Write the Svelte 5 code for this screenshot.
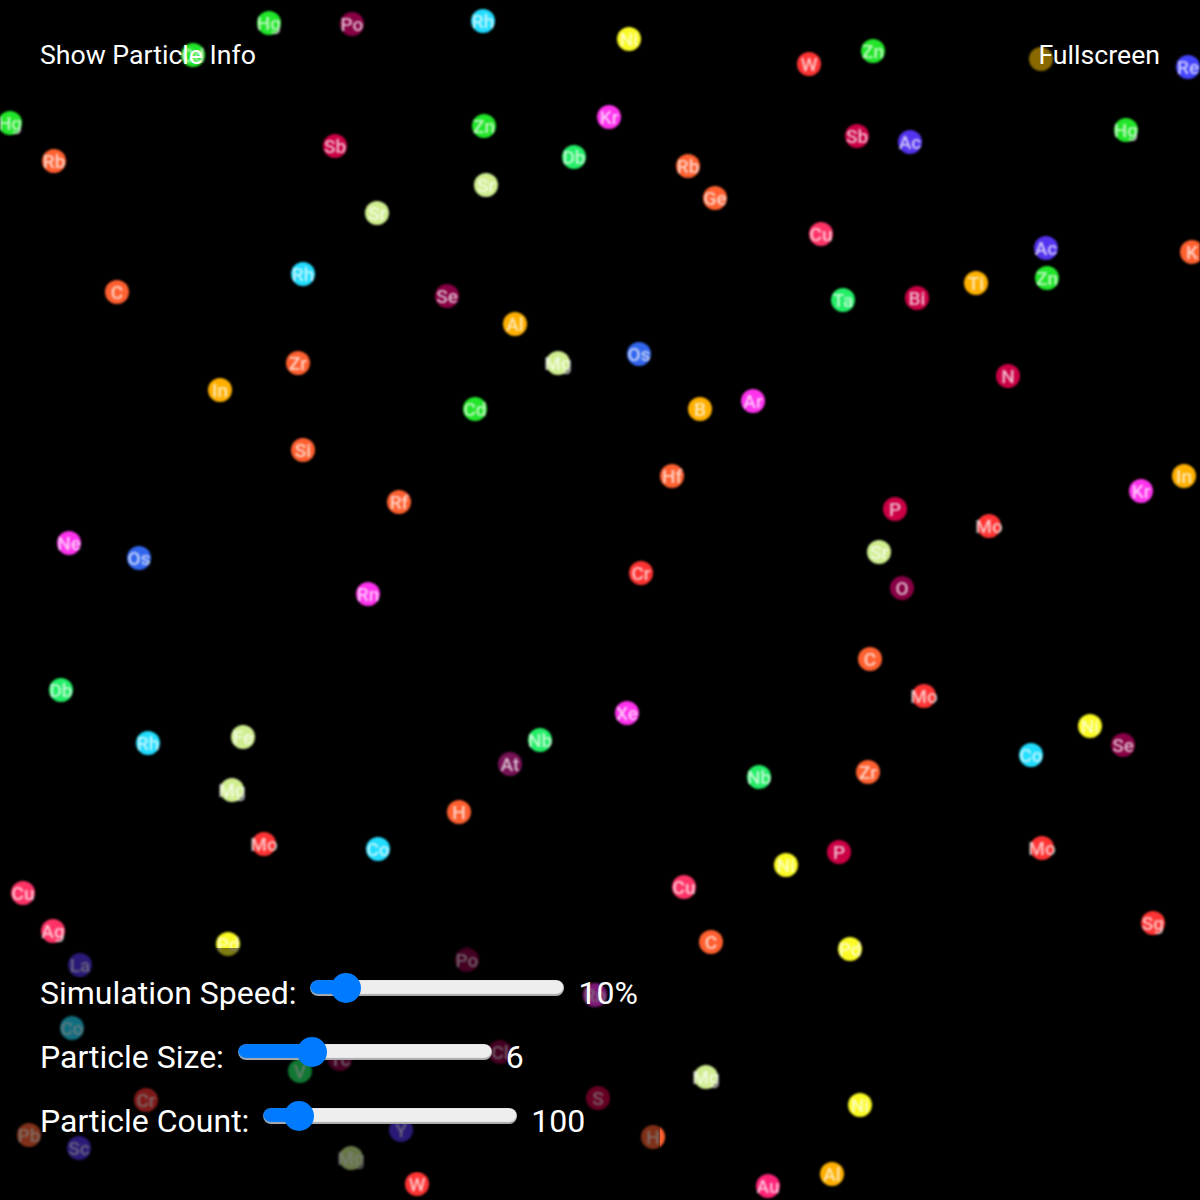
<script lang="ts">
	const ORANGE = '#ff6030';
	const RED = '#ff3333';
	const PINK = '#ff3366';
	const CRIMSON = '#cc0044';
	const WINE = '#880044';
	const MAGENTA = '#ff33ee';
	const VIOLET = '#5533ee';
	const BLUE = '#3366ee';
	const INDIGO = '#4444ff';
	const CYAN = '#22ddff';
	const GREEN = '#22e62a';
	const MINT = '#22ee66';
	const GOLD = '#ffb000';
	const YELLOW = '#fafa22';
	const PALE = '#d0ee90';

	// x, y, symbol, colour
	const particles: [number, number, string, string][] = [
		[269, 23, 'Hg', GREEN], [352, 24, 'Po', WINE], [483, 21, 'Rh', CYAN], [193, 55, 'Cd', GREEN],
		[629, 39, 'Ni', YELLOW], [809, 64, 'W', RED], [873, 51, 'Zn', GREEN], [1041, 59, '', '#8a6a00'],
		[1188, 67, 'Re', INDIGO], [10, 123, 'Hg', GREEN], [54, 161, 'Rb', ORANGE], [335, 146, 'Sb', CRIMSON],
		[484, 126, 'Zn', GREEN], [609, 117, 'Kr', MAGENTA], [574, 157, 'Db', MINT], [486, 185, 'Sr', PALE],
		[377, 213, 'Sr', PALE], [688, 166, 'Rb', ORANGE], [715, 198, 'Ge', ORANGE], [857, 136, 'Sb', CRIMSON],
		[910, 142, 'Ac', VIOLET], [1126, 130, 'Hg', GREEN], [821, 234, 'Cu', PINK], [1046, 248, 'Ac', VIOLET],
		[1192, 252, 'K', ORANGE], [1047, 278, 'Zn', GREEN], [976, 283, 'Ti', GOLD], [843, 300, 'Ta', MINT],
		[917, 298, 'Bi', CRIMSON], [303, 274, 'Rh', CYAN], [117, 292, 'C', ORANGE], [447, 296, 'Se', WINE],
		[515, 324, 'Al', GOLD], [558, 363, 'Mg', PALE], [639, 354, 'Os', BLUE], [298, 363, 'Zr', ORANGE],
		[220, 390, 'In', GOLD], [475, 409, 'Cd', GREEN], [700, 409, 'B', GOLD], [753, 401, 'Ar', MAGENTA],
		[1008, 376, 'N', CRIMSON], [303, 450, 'Si', ORANGE], [672, 476, 'Hf', ORANGE], [399, 502, 'Rf', ORANGE],
		[1184, 476, 'In', GOLD], [1141, 491, 'Kr', MAGENTA], [895, 509, 'P', CRIMSON], [989, 526, 'Mo', RED],
		[879, 552, 'Sr', PALE], [69, 543, 'Ne', MAGENTA], [139, 558, 'Os', BLUE], [368, 594, 'Rn', MAGENTA],
		[641, 573, 'Cr', RED], [902, 588, 'O', WINE], [870, 659, 'C', ORANGE], [924, 696, 'Mo', RED],
		[61, 690, 'Db', MINT], [627, 713, 'Xe', MAGENTA], [1090, 726, 'Ni', YELLOW], [1123, 745, 'Se', WINE],
		[1031, 755, 'Co', CYAN], [243, 737, 'Fe', PALE], [148, 743, 'Rh', CYAN], [540, 740, 'Nb', MINT],
		[510, 764, 'At', '#771155'], [759, 777, 'Nb', MINT], [868, 772, 'Zr', ORANGE], [232, 790, 'Mg', PALE],
		[459, 812, 'H', ORANGE], [264, 844, 'Mo', RED], [378, 849, 'Co', CYAN], [1042, 848, 'Mo', RED],
		[839, 852, 'P', CRIMSON], [786, 865, 'Ni', YELLOW], [684, 887, 'Cu', PINK], [23, 893, 'Cu', PINK],
		[53, 931, 'Ag', PINK], [1153, 923, 'Sg', RED], [711, 942, 'C', ORANGE], [850, 949, 'Pd', YELLOW],
		[228, 944, 'Pd', YELLOW], [80, 965, 'La', VIOLET], [467, 960, 'Po', WINE], [595, 995, 'Rn', MAGENTA],
		[72, 1028, 'Co', CYAN], [340, 1059, 'Tc', WINE], [300, 1071, 'V', MINT], [500, 1052, 'Cl', WINE],
		[146, 1100, 'Cr', RED], [598, 1098, 'S', CRIMSON], [401, 1130, 'Y', VIOLET], [653, 1137, 'H', ORANGE],
		[29, 1135, 'Pb', ORANGE], [79, 1148, 'Sc', VIOLET], [351, 1158, 'Mg', PALE], [417, 1184, 'W', RED],
		[768, 1186, 'Au', '#ff2277'], [832, 1174, 'Al', GOLD], [706, 1077, 'Mg', PALE], [860, 1105, 'Ni', YELLOW]
	];

	let speed = $state(10);
	let size = $state(6);
	let count = $state(100);

	function fill(value: number, min: number, max: number) {
		const pos = 15 + ((value - min) / (max - min)) * 224;
		return `background-image: linear-gradient(to right, #007bff ${pos}px, #eee ${pos}px)`;
	}
</script>

<main>
	<svg class="field" viewBox="0 0 1200 1200" width="1200" height="1200">
		{#each particles as [x, y, symbol, colour]}
			<circle cx={x} cy={y} r="12" fill={colour} />
			<text x={x} y={y + 6.5}>{symbol}</text>
		{/each}
	</svg>

	<div class="top">
		<button>Show Particle Info</button>
		<button>Fullscreen</button>
	</div>

	<div class="controls">
		<label>
			<span>Simulation Speed:</span>
			<input type="range" min="1" max="100" bind:value={speed} style={fill(speed, 1, 100)} />
			<span class="value">{speed}%</span>
		</label>
		<label>
			<span>Particle Size:</span>
			<input type="range" min="1" max="20" bind:value={size} style={fill(size, 1, 20)} />
			<span class="value">{size}</span>
		</label>
		<label>
			<span>Particle Count:</span>
			<input type="range" min="10" max="1000" bind:value={count} style={fill(count, 10, 1000)} />
			<span class="value">{count}</span>
		</label>
	</div>
</main>

<style>
	:global(body) {
		margin: 0;
		background: #000;
		font-family: Roboto, 'Liberation Sans', sans-serif;
		color: #fff;
	}

	main {
		position: relative;
		width: 1200px;
		height: 1200px;
		overflow: hidden;
		background: #000;
	}

	.field {
		position: absolute;
		inset: 0;
		display: block;
		filter: blur(0.8px);
	}

	.field text {
		font-family: Roboto, sans-serif;
		font-size: 19px;
		font-weight: 500;
		text-anchor: middle;
		fill: rgba(255, 255, 255, 0.72);
	}

	.top {
		position: absolute;
		top: 40px;
		left: 40px;
		right: 40px;
		display: flex;
		justify-content: space-between;
	}

	button {
		padding: 0;
		border: none;
		background: none;
		color: #fff;
		font-family: inherit;
		font-size: 26.67px;
		line-height: 30px;
	}

	.controls {
		position: absolute;
		left: 0;
		bottom: 28px;
		display: flex;
		flex-direction: column;
		gap: 32px;
		padding: 29px 22px 35px 40px;
		background: rgba(0, 0, 0, 0.5);
	}

	label {
		display: flex;
		align-items: flex-start;
		font-size: 32px;
		line-height: 32px;
	}

	input[type='range'] {
		width: 254px;
		height: 16px;
		margin: 3px 14px 0 14px;
		appearance: none;
		border-radius: 8px;
		background-color: #eee;
		box-shadow: inset 0 -2px 1px #aaa, inset 0 0 1px #999;
		outline: none;
	}

	input[type='range']::-webkit-slider-thumb {
		appearance: none;
		width: 30px;
		height: 30px;
		border-radius: 50%;
		background: #007bff;
	}
</style>
